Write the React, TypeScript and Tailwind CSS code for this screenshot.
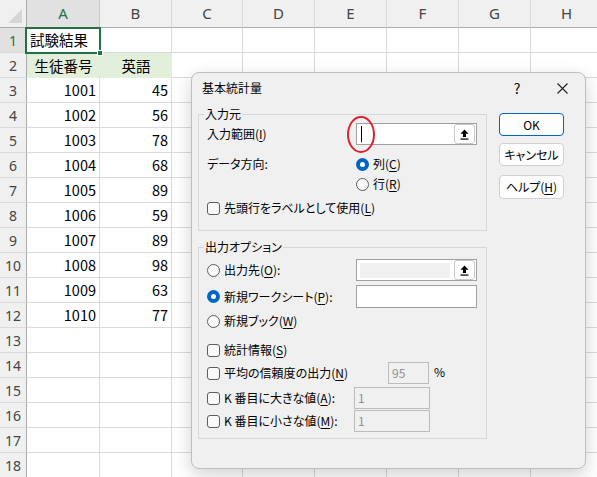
import React from "react";

const cols = ["A", "B", "C", "D", "E", "F", "G", "H"];
const data: Record<number, [string, string]> = {
  3: ["1001", "45"],
  4: ["1002", "56"],
  5: ["1003", "78"],
  6: ["1004", "68"],
  7: ["1005", "89"],
  8: ["1006", "59"],
  9: ["1007", "89"],
  10: ["1008", "98"],
  11: ["1009", "63"],
  12: ["1010", "77"],
};

const jp = { fontFamily: '"Noto Sans CJK JP", "Noto Sans", sans-serif' };

// mnemonic letter with underline, e.g. 入力範囲(I)
const Label = ({ text, k, suffix = "" }: { text: string; k: string; suffix?: string }) => (
  <span className="whitespace-nowrap">
    {text}(<span className="underline underline-offset-2">{k}</span>){suffix}
  </span>
);

const Radio = ({ checked }: { checked?: boolean }) =>
  checked ? (
    <span className="flex h-[13px] w-[13px] shrink-0 items-center justify-center rounded-full bg-[#0067c0]">
      <span className="h-[5px] w-[5px] rounded-full bg-white" />
    </span>
  ) : (
    <span className="h-[13px] w-[13px] shrink-0 rounded-full border border-[#5d5d5d] bg-[#fafafa]" />
  );

const Check = () => (
  <span className="h-[13px] w-[13px] shrink-0 rounded-[3px] border border-[#5d5d5d] bg-[#fafafa]" />
);

const UpButton = () => (
  <span className="flex h-[20px] w-[21px] shrink-0 items-center justify-center rounded-[3px] border border-[#c9c9c9] bg-white">
    <svg width="9" height="11" viewBox="0 0 9 11">
      <path d="M4.5 0.5 L8.5 4.8 L6 4.8 L6 8 L3 8 L3 4.8 L0.5 4.8 Z" fill="#000" />
      <rect x="0.5" y="9.5" width="8" height="1.2" fill="#000" />
    </svg>
  </span>
);

const GroupBox = ({ title, className, children }: { title: string; className: string; children: React.ReactNode }) => (
  <div className={`relative border border-[#d7d7d7] pl-[8px] ${className}`}>
    <span className="absolute -top-[9px] left-[5px] bg-[#f0f0f0] px-px leading-[16px]">{title}</span>
    {children}
  </div>
);

const DisabledBox = ({ value, w }: { value: string; w: string }) => (
  <span className={`flex h-[22px] ${w} items-center border border-[#bcbcbc] bg-[#f0f0f0] pl-[3px] text-[#8f8f8f]`}>
    {value}
  </span>
);

export default function App() {
  const rows = Array.from({ length: 18 }, (_, i) => i + 1);
  return (
    <div className="relative h-[477px] w-[597px] overflow-hidden bg-white" style={jp}>
      {/* sheet */}
      <div className="grid grid-cols-[27px_73px_72px_71px_72px_72px_72px_72px_72px] grid-rows-[28px_repeat(18,25px)]">
        <div className="relative border-b border-r border-[#ababab] bg-[#f0f0f0]">
          <svg className="absolute left-0 top-0" width="26" height="27" viewBox="0 0 26 27">
            <path d="M22 9 L22 23 L8 23 Z" fill="#d6d6d6" />
          </svg>
        </div>
        {cols.map((c) => (
          <div
            key={c}
            className={`flex items-center justify-center border-b border-r text-[15px] ${
              c === "A"
                ? "border-b-[#ababab] border-r-[#c8c8c8] bg-[#e1e1e1] text-[#217346]"
                : "border-b-[#ababab] border-r-[#dadada] bg-[#f0f0f0] text-[#444]"
            }`}
            style={{ fontFamily: '"Noto Sans", sans-serif' }}
          >
            {c}
          </div>
        ))}
        {rows.map((r) => (
          <React.Fragment key={r}>
            <div
              className={`flex items-center justify-center border-b border-r border-b-[#dadada] border-r-[#ababab] text-[14px] ${
                r === 1 ? "bg-[#e1e1e1] text-[#217346]" : "bg-[#f0f0f0] text-[#444]"
              }`}
              style={{ fontFamily: '"Noto Sans", sans-serif' }}
            >
              {r}
            </div>
            {cols.map((c, ci) => {
              const green = r === 2 && ci < 2;
              let content: React.ReactNode = null;
              let align = "justify-end pr-[3px]";
              if (r === 1 && ci === 0) {
                content = "試験結果";
                align = "justify-start pl-[3px]";
              } else if (r === 2 && ci === 0) {
                content = "生徒番号";
                align = "justify-center";
              } else if (r === 2 && ci === 1) {
                content = "英語";
                align = "justify-center";
              } else if (data[r] && ci < 2) {
                content = data[r][ci];
              }
              return (
                <div
                  key={c}
                  className={`flex items-center text-[14.5px] text-black ${align} ${
                    green ? "bg-[#e2efda]" : "border-b border-r border-[#dadada]"
                  }`}
                >
                  {content}
                </div>
              );
            })}
          </React.Fragment>
        ))}
      </div>

      {/* active cell A1 */}
      <div className="absolute left-[25px] top-[27px] h-[27px] w-[76px] border-2 border-[#217346]">
        <span className="absolute -bottom-[4px] -right-[4px] h-[6px] w-[6px] border border-white bg-[#217346]" />
      </div>

      {/* dialog */}
      <div className="absolute left-[191px] top-[72px] h-[397px] w-[395px] rounded-[8px] border border-[#bfbfbf] bg-[#f0f0f0] text-[12px] leading-[16px] text-black shadow-[0_6px_18px_rgba(0,0,0,0.18)] [font-feature-settings:'palt']">
        <div className="flex h-[30px] items-center pl-[10px]">
          <span>基本統計量</span>
          <span className="ml-auto flex w-[30px] justify-center text-[14px]">?</span>
          <span className="ml-[15px] mr-[8px] flex w-[30px] justify-center">
            <svg width="11" height="11" viewBox="0 0 11 11">
              <path d="M0.5 0.5 L10.5 10.5 M10.5 0.5 L0.5 10.5" stroke="#222" strokeWidth="1.1" />
            </svg>
          </span>
        </div>

        <div className="flex pl-[6px] pt-[11px]">
          <div className="flex w-[289px] flex-col">
            <GroupBox title="入力元" className="h-[117px]">
              <div className="mt-[8px] flex h-[22px] items-center">
                <Label text="入力範囲" k="I" />
                <span className="ml-auto mr-[9px] flex h-[22px] w-[121px] items-center border border-[#a0a0a0] bg-white pl-[4px] pr-px">
                  <span className="h-[16px] w-px bg-black" />
                  <span className="ml-auto">
                    <UpButton />
                  </span>
                </span>
              </div>
              <div className="mt-[9px] flex h-[20px] items-center">
                <span className="w-[149px]">データ方向:</span>
                <Radio checked />
                <span className="ml-[4px]">
                  <Label text="列" k="C" />
                </span>
              </div>
              <div className="flex h-[20px] items-center">
                <span className="w-[149px]" />
                <Radio />
                <span className="ml-[4px]">
                  <Label text="行" k="R" />
                </span>
              </div>
              <div className="mt-[4px] flex h-[20px] items-center">
                <Check />
                <span className="ml-[4px]">
                  <Label text="先頭行をラベルとして使用" k="L" />
                </span>
              </div>
            </GroupBox>

            <GroupBox title="出力オプション" className="mt-[16px] h-[192px]">
              <div className="mt-[11px] flex h-[22px] items-center">
                <Radio />
                <span className="ml-[4px]">
                  <Label text="出力先" k="O" suffix=":" />
                </span>
                <span className="ml-auto mr-[9px] flex h-[22px] w-[121px] items-center border border-[#a0a0a0] bg-white pl-[3px] pr-px">
                  <span className="h-[15px] w-[90px] bg-[#f0f0f0]" />
                  <span className="ml-auto">
                    <UpButton />
                  </span>
                </span>
              </div>
              <div className="mt-[4px] flex h-[23px] items-center">
                <Radio checked />
                <span className="ml-[4px]">
                  <Label text="新規ワークシート" k="P" suffix=":" />
                </span>
                <span className="ml-auto mr-[9px] h-[23px] w-[121px] border border-[#a0a0a0] bg-white" />
              </div>
              <div className="mt-[3px] flex h-[20px] items-center">
                <Radio />
                <span className="ml-[4px]">
                  <Label text="新規ブック" k="W" />
                </span>
              </div>
              <div className="mt-[9px] flex h-[20px] items-center">
                <Check />
                <span className="ml-[4px]">
                  <Label text="統計情報" k="S" />
                </span>
              </div>
              <div className="mt-[2px] flex h-[22px] items-center">
                <span className="flex w-[181px] items-center">
                  <Check />
                  <span className="ml-[4px]">
                    <Label text="平均の信頼度の出力" k="N" />
                  </span>
                </span>
                <DisabledBox value="95" w="w-[41px]" />
                <span className="ml-[5px] -mt-[3px]">%</span>
              </div>
              <div className="mt-[3px] flex h-[22px] items-center">
                <span className="flex w-[147px] items-center">
                  <Check />
                  <span className="ml-[4px]">
                    <Label text="K 番目に大きな値" k="A" suffix=":" />
                  </span>
                </span>
                <DisabledBox value="1" w="w-[76px]" />
              </div>
              <div className="mt-px flex h-[22px] items-center">
                <span className="flex w-[147px] items-center">
                  <Check />
                  <span className="ml-[4px]">
                    <Label text="K 番目に小さな値" k="M" suffix=":" />
                  </span>
                </span>
                <DisabledBox value="1" w="w-[76px]" />
              </div>
            </GroupBox>
          </div>

          <div className="-mt-px ml-[12px] flex w-[65px] flex-col">
            <button className="h-[23px] rounded-[4px] border border-[#0067c0] bg-[#fdfdfd] text-[12px]">OK</button>
            <button className="mt-[7px] h-[23px] rounded-[4px] border border-[#d0d0d0] bg-[#fdfdfd] text-[12px]">
              キャンセル
            </button>
            <button className="mt-[9px] h-[24px] rounded-[4px] border border-[#d0d0d0] bg-[#fdfdfd] text-[12px]">
              <Label text="ヘルプ" k="H" />
            </button>
          </div>
        </div>

        {/* red highlight */}
        <div className="absolute left-[155px] top-[43px] h-[37px] w-[28px] rounded-[50%] border-2 border-[#e3212b]" />
      </div>
    </div>
  );
}
